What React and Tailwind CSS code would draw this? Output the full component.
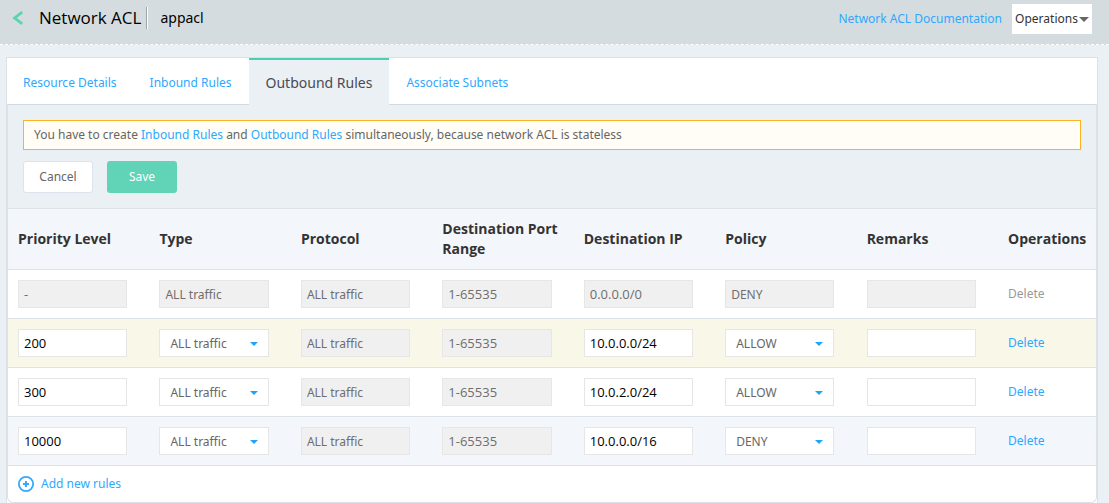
const columns = [
  'Priority Level',
  'Type',
  'Protocol',
  'Destination Port Range',
  'Destination IP',
  'Policy',
  'Remarks',
]

const rules = [
  { priority: '-', ip: '0.0.0.0/0', policy: 'DENY', locked: true, tone: 'bg-white' },
  { priority: '200', ip: '10.0.0.0/24', policy: 'ALLOW', tone: 'bg-[#f8f7e8]' },
  { priority: '300', ip: '10.0.2.0/24', policy: 'ALLOW', tone: 'bg-white' },
  { priority: '10000', ip: '10.0.0.0/16', policy: 'DENY', tone: 'bg-[#f3f6fb]' },
]

const link = 'text-[#2ea8ff] hover:underline'

function Field({ label, value, disabled, numeric }) {
  return (
    <input
      type="text"
      aria-label={label}
      defaultValue={value}
      disabled={disabled}
      className={`block h-7 w-[90%] border border-[#e6e6e6] bg-white px-[5px] text-black outline-none disabled:bg-[#f0f0f0] disabled:text-[#6e6e6e] ${
        numeric ? "font-['Open_Sans','Noto_Sans',sans-serif] text-[13px]" : ''
      }`}
    />
  )
}

function Picker({ label, value, options }) {
  return (
    <div className="relative w-[90%]">
      <select
        aria-label={label}
        defaultValue={value}
        className="block h-7 w-full appearance-none border border-[#e6e6e6] bg-white pl-2.5 pr-6 pt-0.5 text-[#666] outline-none"
      >
        {options.map((o) => (
          <option key={o}>{o}</option>
        ))}
      </select>
      <svg
        viewBox="0 0 8 4"
        className="pointer-events-none absolute right-[11px] top-[13px] h-1 w-2 fill-[#1ea5fa]"
        aria-hidden="true"
      >
        <path d="M0 0h8L4 4z" />
      </svg>
    </div>
  )
}

function RuleRow({ rule }) {
  const { priority, ip, policy, locked, tone } = rule
  return (
    <tr className={`h-[49px] border-b border-[#dbe3e8] ${tone}`}>
      <td className="px-2.5">
        <Field label="Priority level" value={priority} disabled={locked} numeric />
      </td>
      <td className="px-2.5">
        {locked ? (
          <Field label="Type" value="ALL traffic" disabled />
        ) : (
          <Picker label="Type" value="ALL traffic" options={['ALL traffic', 'TCP', 'UDP', 'ICMP']} />
        )}
      </td>
      <td className="px-2.5">
        <Field label="Protocol" value="ALL traffic" disabled />
      </td>
      <td className="px-2.5">
        <Field label="Destination port range" value="1-65535" disabled numeric />
      </td>
      <td className="px-2.5">
        <Field label="Destination IP" value={ip} disabled={locked} numeric />
      </td>
      <td className="px-2.5">
        {locked ? (
          <Field label="Policy" value={policy} disabled />
        ) : (
          <Picker label="Policy" value={policy} options={['ALLOW', 'DENY']} />
        )}
      </td>
      <td className="px-2.5">
        <Field label="Remarks" value="" disabled={locked} />
      </td>
      <td className="pl-2.5">
        <button type="button" disabled={locked} className="text-[#2ea8ff] disabled:text-[#999]">
          Delete
        </button>
      </td>
    </tr>
  )
}

export default function App() {
  return (
    <div className="min-h-screen bg-[#ebf0f4] font-['Noto_Sans','Open_Sans',sans-serif] text-[12px] leading-5 text-[#666]">
      <header className="flex h-[45px] items-start justify-between border-b border-dashed border-white bg-[#d5dcdf] pl-3 pr-[17px]">
        <div className="flex items-center pt-[7px] text-black">
          <a href="#back" aria-label="Back" className="flex w-[27px]">
            <svg viewBox="0 0 12 14" className="h-3.5 w-3" aria-hidden="true">
              <path d="M10.2 1.2 2.6 7l7.6 5.8" fill="none" stroke="#5bd2b5" strokeWidth="2.8" />
            </svg>
          </a>
          <h1 className="font-['Open_Sans','Noto_Sans',sans-serif] text-[17px] leading-5">Network ACL</h1>
          <span className="ml-[5px] mr-3 h-[22px] w-0.5 border-l border-r border-l-[#9aa3a8] border-r-white" />
          <span className="text-[14px]">appacl</span>
        </div>
        <div className="flex items-center gap-2.5 pt-1">
          <a href="#docs" className={link}>
            Network ACL Documentation
          </a>
          <button type="button" className="flex h-[30px] w-20 items-center justify-center gap-px bg-white text-[#333]">
            Operations
            <svg viewBox="0 0 10 5" className="h-[5px] w-2.5 fill-[#666]" aria-hidden="true">
              <path d="M0 0h10L5 5z" />
            </svg>
          </button>
        </div>
      </header>

      <main className="ml-1.5 mr-[11px] mt-3 border-x border-t border-[#dbe1e6] bg-white">
        <nav className="flex h-[47px] gap-px border-b border-[#cfdae4]">
          <a href="#details" className={`flex items-center px-4 pt-1 ${link}`}>
            Resource Details
          </a>
          <a href="#inbound" className={`flex items-center px-4 pt-1 ${link}`}>
            Inbound Rules
          </a>
          <a
            href="#outbound"
            aria-current="page"
            className="-mb-px flex items-center border-t-2 border-[#4fcfb1] bg-[#ebf0f4] px-[17px] text-[14px] text-[#4a4a55]"
          >
            Outbound Rules
          </a>
          <a href="#subnets" className={`flex items-center px-4 pt-1 ${link}`}>
            Associate Subnets
          </a>
        </nav>

        <section className="overflow-hidden rounded-b-md border-x border-b border-[#dbe1e6]">
          <div className="bg-[#ebf0f4] p-[15px]">
            <p className="border border-[#f9b31c] bg-[#fffdf6] px-2.5 py-1">
              You have to create{' '}
              <a href="#inbound" className={link}>
                Inbound Rules
              </a>{' '}
              and{' '}
              <a href="#outbound" className={link}>
                Outbound Rules
              </a>{' '}
              simultaneously, because network ACL is stateless
            </p>
            <div className="mt-[11px] flex gap-3.5">
              <button type="button" className="h-8 w-[70px] rounded-[3px] border border-[#dbe3ec] bg-white">
                Cancel
              </button>
              <button type="button" className="h-8 w-[70px] rounded-[3px] bg-[#61d3b6] text-white">
                Save
              </button>
            </div>
          </div>

          <table className="w-full table-fixed border-collapse border-t border-[#dbe3e8]">
            <thead>
              <tr className="h-[61px] border-b border-[#dbe3e8] bg-[#f3f6fb] text-left font-['Open_Sans','Noto_Sans',sans-serif] text-[14px] text-[#333]">
                {columns.map((c) => (
                  <th key={c} scope="col" className="w-[13%] px-2.5 font-bold">
                    {c}
                  </th>
                ))}
                <th scope="col" className="pl-2.5 font-bold">
                  Operations
                </th>
              </tr>
            </thead>
            <tbody>
              {rules.map((r) => (
                <RuleRow key={r.priority} rule={r} />
              ))}
            </tbody>
          </table>

          <div className="px-2.5 py-2">
            <button type="button" className="flex items-center gap-[7px] text-[#2ea8ff]">
              <svg viewBox="0 0 16 16" className="h-4 w-4" fill="none" stroke="#35a9fb" aria-hidden="true">
                <circle cx="8" cy="8" r="7.1" strokeWidth="1.8" />
                <path d="M8 5v6M5 8h6" strokeWidth="2" />
              </svg>
              Add new rules
            </button>
          </div>
        </section>
      </main>
    </div>
  )
}
